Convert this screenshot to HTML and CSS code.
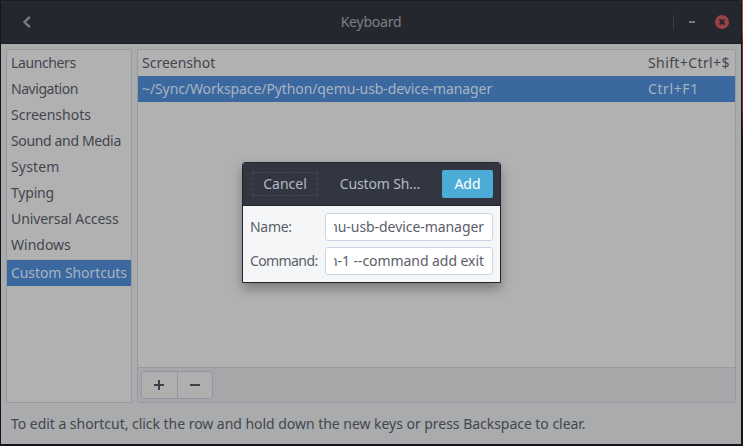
FILE: index.html
```html
<!DOCTYPE html>
<html lang="en">
<head>
<meta charset="utf-8">
<title>Keyboard</title>
<link rel="stylesheet" href="styles.css">
</head>
<body>
<div class="desktop">
  <main class="window">
    <header class="titlebar">
      <svg class="back" width="16" height="16" viewBox="0 0 16 16"><path d="M11.8 2.8 L6.5 8 L11.8 13.2"/></svg>
      <h1 class="title"><span class="t-keyboard">Keyboard</span></h1>
      <div class="controls">
        <i class="divider"></i>
        <i class="minimize"></i>
        <svg class="close" width="14" height="14" viewBox="0 0 14 14"><circle cx="7" cy="7" r="7"/><path d="M4.5 4.5 L9.5 9.5 M9.5 4.5 L4.5 9.5"/></svg>
      </div>
    </header>
    <div class="content">
      <nav class="sidebar">
        <div class="item"><span class="t-launchers">Launchers</span></div>
        <div class="item"><span class="t-navigation">Navigation</span></div>
        <div class="item"><span class="t-screenshots">Screenshots</span></div>
        <div class="item"><span class="t-sound">Sound and Media</span></div>
        <div class="item"><span class="t-system">System</span></div>
        <div class="item"><span class="t-typing">Typing</span></div>
        <div class="item"><span class="t-access">Universal Access</span></div>
        <div class="item"><span class="t-windows">Windows</span></div>
        <div class="separator"></div>
        <div class="item selected"><span class="t-custom">Custom Shortcuts</span></div>
      </nav>
      <section class="shortcuts">
        <div class="row"><div class="name"><span class="t-screenshot">Screenshot</span></div><div class="keys"><span class="t-shift">Shift+Ctrl+$</span></div></div>
        <div class="row selected"><div class="name"><span class="t-path">~/Sync/Workspace/Python/qemu-usb-device-manager</span></div><div class="keys"><span class="t-ctrl">Ctrl+F1</span></div></div>
        <div class="toolbar">
          <div class="buttons">
            <button class="tool" aria-label="Add"><svg width="10" height="10" viewBox="0 0 10 10"><path d="M0 5 H10 M5 0 V10"/></svg></button>
            <button class="tool" aria-label="Remove"><svg width="10" height="10" viewBox="0 0 10 10"><path d="M0 5 H10"/></svg></button>
          </div>
        </div>
      </section>
    </div>
    <footer class="hint"><span class="t-hint">To edit a shortcut, click the row and hold down the new keys or press Backspace to clear.</span></footer>
  </main>
  <div class="dialog">
    <div class="dialog-head">
      <button class="cancel"><span class="t-cancel">Cancel</span></button>
      <div class="dialog-title"><span class="t-dialog">Custom Sh…</span></div>
      <button class="add"><span class="t-add">Add</span></button>
    </div>
    <div class="form">
      <label class="label"><span class="t-name">Name:</span></label>
      <div class="entry"><div class="clip"><span class="t-entry1">mu-usb-device-manager</span></div></div>
      <label class="label"><span class="t-command">Command:</span></label>
      <div class="entry"><div class="clip"><span class="t-entry2">n-1 --command add exit</span></div></div>
    </div>
  </div>
</div>
</body>
</html>
```
FILE: styles.css
```css
* { box-sizing: border-box; }
body { margin: 0; font: 14px/26px "Noto Sans", "Open Sans", sans-serif; color: #43464e; }
button { font: inherit; margin: 0; padding: 0; }
span { white-space: nowrap; }
.desktop { position: relative; width: 743px; height: 446px; padding: 0 1px 2px; overflow: hidden;
  background: linear-gradient(#b5542c 0, #a84a2a 36px, #8f1f24 40px, #8f1f24 110px, #3a1224 130px, #15131b 160px) right / 1px 100% no-repeat, #15131b; }
.window { display: flex; flex-direction: column; width: 740px; height: 444px; background: #a9abad; border-radius: 3px 3px 0 0; overflow: hidden; }
.titlebar { flex: none; display: grid; grid-template-columns: 1fr auto 1fr; align-items: center; height: 44px; padding: 0 12px 0 17px; background: #25272f; border-top: 1px solid #1c1d20; border-bottom: 1px solid #1d1e23; }
.back { fill: none; stroke: #777c84; stroke-width: 2.4; }
.title { margin: 0 5px 0 0; font: inherit; color: #7b8087; }
.controls { display: flex; align-items: center; justify-content: flex-end; }
.divider { width: 1px; height: 15px; margin-right: 15px; background: #393b43; }
.minimize { width: 6px; height: 2px; margin-right: 20px; background: #777a7f; }
.close circle { fill: #9b4145; }
.close path { stroke: #25272f; stroke-width: 2; }
.content { flex: none; display: flex; gap: 5px; height: 359px; padding: 5px 5px 0; }
.sidebar { width: 126px; border: 1px solid #989a9f; background: #b1b1b1; }
.item { height: 26px; padding-left: 4px; }
.separator { height: 2px; margin: 0 1px; border-bottom: 1px solid #a2a4a6; }
.selected { background: #3a689f; color: #a9b4c2; }
.shortcuts { display: flex; flex-direction: column; flex: 1; border: 1px solid #989a9f; border-radius: 0 0 3px 3px; background: #b1b1b1; }
.row { display: flex; height: 26px; padding-left: 4px; }
.name { width: 506px; }
.toolbar { height: 35px; margin-top: auto; padding: 3px; border-top: 1px solid #989a9c; background: #a5a7a9; }
.buttons { display: flex; width: 72px; height: 28px; border: 1px solid #9296a3; border-radius: 3px; background: #afafb0; }
.tool { display: grid; place-items: center; flex: 1; border: 0; background: none; }
.tool + .tool { border-left: 1px solid #9296a3; }
.tool path { stroke: #3e414b; stroke-width: 2; }
.hint { flex: none; padding: 8px 10px 7px; }
.dialog { position: absolute; left: 242px; top: 162px; width: 259px; height: 121px; border: 1px solid #22242b; border-radius: 3px 3px 0 0; background: #f5f6f8; box-shadow: 0 6px 12px rgba(0,0,0,.3); overflow: hidden; color: #5b5e68; }
.dialog-head { display: flex; justify-content: space-between; align-items: center; height: 43px; padding: 0 7px 0 9px; border-bottom: 1px solid #22252d; background: #323640; color: #b4bac3; }
.cancel { width: 66px; height: 24px; border: 1px dashed #444852; background: none; color: inherit; line-height: 22px; }
.add { width: 51px; height: 28px; border: 0; border-radius: 2px; background: #4dacd5; color: #fff; line-height: 28px; }
.form { display: grid; grid-template-columns: 75px 168px; gap: 6px 0; padding: 7px; }
.label { line-height: 28px; }
.entry { height: 28px; padding: 0 8px; border: 1px solid #cdd3e4; border-radius: 3px; background: #fff; }
.clip { display: flex; justify-content: flex-end; overflow: hidden; }

/* Per-label tracking */
.t-keyboard { letter-spacing: -.22px; }
.t-launchers { letter-spacing: -.38px; }
.t-navigation { letter-spacing: -.45px; }
.t-sound { letter-spacing: -.35px; }
.t-system { letter-spacing: .15px; }
.t-typing { letter-spacing: -.2px; }
.t-access { letter-spacing: -.08px; }
.t-custom { letter-spacing: -.08px; }
.t-path { letter-spacing: -.1px; }
.t-shift { letter-spacing: .4px; }
.t-ctrl { letter-spacing: .6px; }
.t-hint { letter-spacing: -.035px; }
.t-command { letter-spacing: -.6px; }
.t-name { letter-spacing: -.3px; }
.t-dialog { letter-spacing: -.15px; }
.t-entry1, .t-entry2 { letter-spacing: -.06px; }
```
